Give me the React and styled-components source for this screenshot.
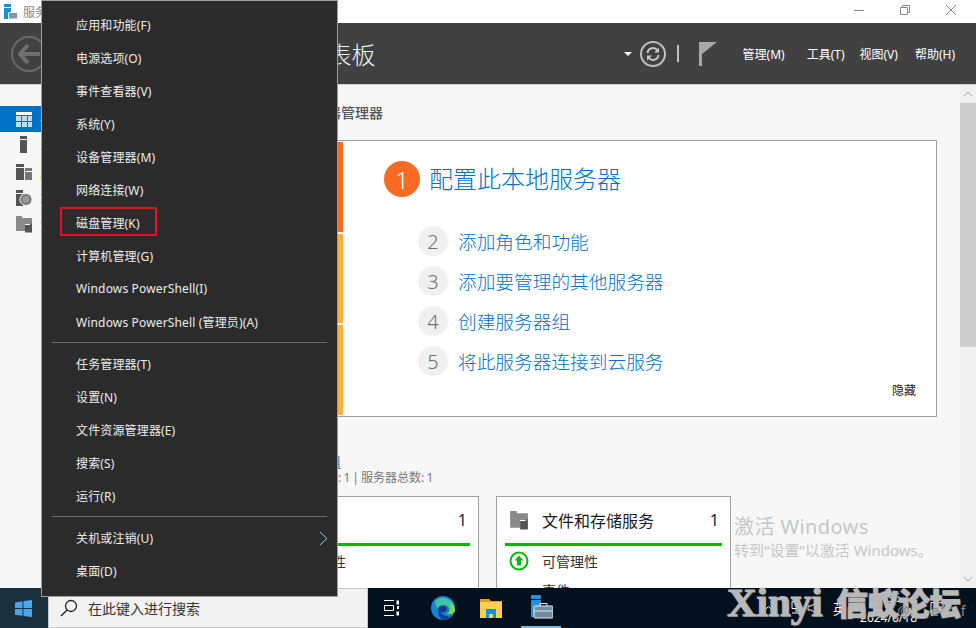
import React from 'react';
import styled, { createGlobalStyle } from 'styled-components';

const GlobalStyle = createGlobalStyle`
	html, body {
		margin: 0;
		padding: 0;
		background: #f7f7f7;
		overflow: hidden;
	}
	* {
		box-sizing: border-box;
	}
`;

const FONT = `"Noto Sans", "Noto Sans CJK SC", sans-serif`;

const menuGroups = [
	['应用和功能(F)', '电源选项(O)', '事件查看器(V)', '系统(Y)', '设备管理器(M)', '网络连接(W)', '磁盘管理(K)', '计算机管理(G)', 'Windows PowerShell(I)', 'Windows PowerShell (管理员)(A)'],
	['任务管理器(T)', '设置(N)', '文件资源管理器(E)', '搜索(S)', '运行(R)'],
	['关机或注销(U)', '桌面(D)'],
];

const steps = [
	['2', '添加角色和功能'],
	['3', '添加要管理的其他服务器'],
	['4', '创建服务器组'],
	['5', '将此服务器连接到云服务'],
];

const DashIcon = () => (
	<svg width="18" height="17" viewBox="0 0 18 17">
		<rect x="1" y="1" width="16" height="3" fill="#fff" />
		<path d="M1 5h5v5H1zM7 5h5v5H7zM13 5h4v5h-4zM1 11h5v5H1zM7 11h5v5H7zM13 11h4v5h-4z" fill="#bcdcf2" />
	</svg>
);

const ServerIcon = () => (
	<svg width="18" height="18" viewBox="0 0 18 18">
		<rect x="5" y="0" width="7" height="3" fill="#555" />
		<rect x="5" y="4" width="7" height="13" fill="#555" />
	</svg>
);

const ServersIcon = () => (
	<svg width="18" height="18" viewBox="0 0 18 18">
		<rect x="1" y="1" width="8" height="3" fill="#555" />
		<rect x="1" y="5" width="8" height="12" fill="#555" />
		<rect x="10" y="5" width="7" height="3" fill="#777" />
		<rect x="10" y="9" width="7" height="8" fill="#777" />
	</svg>
);

const IisIcon = () => (
	<svg width="18" height="18" viewBox="0 0 18 18">
		<rect x="1" y="1" width="7" height="3" fill="#555" />
		<rect x="1" y="5" width="7" height="12" fill="#555" />
		<circle cx="11" cy="10.500" r="6" fill="#777" stroke="#f7f7f7" />
		<circle cx="11" cy="10.500" r="3.500" fill="#999" />
	</svg>
);

const FilesIcon = ({ size = 18 }) => (
	<svg width={size} height={size} viewBox="0 0 18 18">
		<path d="M1 1h6v2h10v6h-7v7H1z" fill="#8a8a8a" />
		<path d="M10 10h4.500l2.500-2.500V17.500h-7z" fill="#555" />
	</svg>
);

function App() {
	return (
		<Page>
			<GlobalStyle />
			<TitleBar>
				<svg width="16" height="16" viewBox="0 0 16 16">
					<rect x="2" y="0" width="7" height="3" fill="#1b8ed8" />
					<rect x="2" y="4" width="7" height="11" fill="#1b8ed8" />
					<rect x="6.500" y="8.500" width="9" height="6.500" rx="1" fill="#7d97aa" stroke="#fff" />
				</svg>
				<TitleText>服务器管理器</TitleText>
				<WinControls>
					<svg width="12" height="12" viewBox="0 0 12 12"><path d="M1 6.500h10" stroke="#888" /></svg>
					<svg width="12" height="12" viewBox="0 0 12 12" fill="none"><path d="M1.500 3.500h7v7h-7zM3.500 3.500v-2h7v7h-2" stroke="#888" /></svg>
					<svg width="12" height="12" viewBox="0 0 12 12"><path d="M1 1l10 10M11 1L1 11" stroke="#888" /></svg>
				</WinControls>
			</TitleBar>

			<Header>
				<BackButton>
					<svg width="24" height="22" viewBox="0 0 24 22" fill="none">
						<path d="M11 2L3 11l8 9M3 11h20" stroke="#6f6f6f" strokeWidth="4" />
					</svg>
				</BackButton>
				<HeaderTitle>服务器管理器 • 仪表板</HeaderTitle>
				<Tools>
					<Caret />
					<RefreshButton>
						<svg width="16" height="16" viewBox="0 0 16 16" fill="none">
							<path d="M2.500 7A5.500 5.500 0 0 1 12.500 4.500M13.500 9A5.500 5.500 0 0 1 3.500 11.500" stroke="#c8c8c8" strokeWidth="2" />
							<path d="M14 1.500v5H9zM2 14.500v-5h5z" fill="#c8c8c8" />
						</svg>
					</RefreshButton>
					<Divider />
					<svg width="18" height="24" viewBox="0 0 18 24">
						<rect x="0" y="0" width="3" height="24" fill="#a8a8a8" />
						<path d="M3 0h15l-15 12z" fill="#a8a8a8" />
					</svg>
				</Tools>
				<Nav>
					<NavItem $after={22}>管理(M)</NavItem>
					<NavItem $after={15}>工具(T)</NavItem>
					<NavItem $after={17}>视图(V)</NavItem>
					<NavItem>帮助(H)</NavItem>
				</Nav>
			</Header>

			<Body>
				<Sidebar>
					<SideRow $active><DashIcon /><span>仪表板</span></SideRow>
					<SideRow><ServerIcon /><span>本地服务器</span></SideRow>
					<SideRow><ServersIcon /><span>所有服务器</span></SideRow>
					<SideRow><IisIcon /><span>IIS</span></SideRow>
					<SideRow><FilesIcon /><span>文件和存储服务</span></SideRow>
				</Sidebar>

				<Main>
					<Welcome>欢迎使用服务器管理器</Welcome>
					<QuickPanel>
						<Tiles>
							<Tile $color="#f96a22">快速启动</Tile>
							<Tile $color="#fdb03e">新增功能</Tile>
							<Tile $color="#fdb03e">了解详细信息</Tile>
						</Tiles>
						<QuickBody>
							<Lead>
								<LeadBadge>1</LeadBadge>
								<LeadText>配置此本地服务器</LeadText>
							</Lead>
							<Steps>
								{steps.map(([num, label]) => (
									<Step key={num}>
										<StepBadge>{num}</StepBadge>
										<StepText>{label}</StepText>
									</Step>
								))}
							</Steps>
							<HideLink>隐藏</HideLink>
						</QuickBody>
					</QuickPanel>

					<SectionTitle>角色和服务器组</SectionTitle>
					<SectionSub>角色: 1 | 服务器组: 1 | 服务器总数: 1</SectionSub>

					<Cards>
						<Card title="IIS" />
						<Card title="文件和存储服务" />
					</Cards>
				</Main>

				<Scrollbar>
					<ScrollArrow>
						<svg width="10" height="6" viewBox="0 0 10 6" fill="none"><path d="M1 5l4-4 4 4" stroke="#a0a0a0" /></svg>
					</ScrollArrow>
					<ScrollThumb />
					<ScrollArrow $bottom>
						<svg width="10" height="6" viewBox="0 0 10 6" fill="none"><path d="M1 1l4 4 4-4" stroke="#a0a0a0" /></svg>
					</ScrollArrow>
				</Scrollbar>
			</Body>

			<Taskbar>
				<StartButton>
					<svg width="17" height="17" viewBox="0 0 17 17">
						<path d="M0 2.400l7.500-1.100v6.800H0zM8.500 1.100L17 0v8.100H8.500zM0 9h7.500v6.800L0 14.700zM8.500 9H17v8l-8.500-1.100z" fill="#4aa5ec" />
					</svg>
				</StartButton>
				<SearchBox>
					<svg width="18" height="18" viewBox="0 0 18 18" fill="none">
						<circle cx="11" cy="7" r="5.500" stroke="#222" strokeWidth="1.300" />
						<path d="M7 11L1 17" stroke="#222" strokeWidth="1.500" />
					</svg>
					<SearchText>在此键入进行搜索</SearchText>
				</SearchBox>
				<TaskSlot $pad={4}>
					<svg width="16" height="16" viewBox="0 0 16 16" fill="none" stroke="#fff">
						<path d="M1 .5h10M1 15.500h10M1.500 5.500h9v5h-9z" />
						<rect x="14" y="1" width="1.500" height="3" fill="#fff" />
						<rect x="14" y="6" width="2" height="3" fill="#fff" stroke="none" />
						<rect x="14" y="12" width="1.500" height="3" fill="#fff" />
					</svg>
				</TaskSlot>
				<TaskSlot>
					<svg width="26" height="26" viewBox="0 0 26 26">
						<circle cx="13" cy="13" r="12" fill="#1682d8" />
						<path d="M5 6a12 12 0 0 1 20 9c0 2-2 4-5 4h-4c3-1 4-3 3-6-2-4-10-4-11 1-2-3-3-5-3-8z" fill="#3ec6a0" />
						<path d="M20 8a12 12 0 0 1 5 7c0 2-2 4-5 4h-3c3-2 4-6 3-11z" fill="#7ad94e" />
						<path d="M8 14c0-3 4-4 7-3 3 1 2 5 0 6-2 1-4 0-5-1 1 3 4 5 8 5l2 1a12 12 0 0 1-7 3c-4-2-5-7-5-11z" fill="#0c3f8f" />
					</svg>
				</TaskSlot>
				<TaskSlot $pad={4}>
					<svg width="22" height="20" viewBox="0 0 22 20">
						<path d="M0 1h9l2 2h11v3H0z" fill="#e0a020" />
						<rect x="0" y="4" width="22" height="16" fill="#fbd154" />
						<path d="M6 11h10v9h-3v-4H9v4H6z" fill="#1b8ed8" />
					</svg>
				</TaskSlot>
				<TaskSlot $active>
					<svg width="24" height="26" viewBox="0 0 24 26">
						<rect x="2" y="0" width="10" height="4" fill="#2590dc" />
						<rect x="2" y="5" width="10" height="17" fill="#2590dc" />
						<rect x="5" y="11" width="19" height="12" rx="1" fill="#6f8ca3" stroke="#e8eef2" />
						<path d="M11 11V8.500h7V11M5 16h19" stroke="#e8eef2" fill="none" />
					</svg>
				</TaskSlot>
				<Tray>
					<TrayCaret width="9" height="6" viewBox="0 0 9 6" fill="none">
						<path d="M.5 5.500l4-4 4 4" stroke="#fff" />
					</TrayCaret>
					<TrayIcons>
						<svg width="14" height="14" viewBox="0 0 14 14" fill="none" stroke="#fff"><path d="M3 .5h8v7H3zM7 8v3M3 12h8" /></svg>
						<svg width="14" height="14" viewBox="0 0 14 14" fill="none" stroke="#fff"><path d="M11 1L5 5H2v4h3l6 4z" /></svg>
					</TrayIcons>
					<TrayText>英</TrayText>
					<Clock>
						<span>9:36</span>
						<span>2024/6/18</span>
					</Clock>
					<svg width="14" height="14" viewBox="0 0 14 14" fill="none" stroke="#fff"><path d="M1 1.500h12v9H6l-3 2.500v-2.500H1z" /></svg>
				</Tray>
			</Taskbar>

			<ActivateNote>
				<ActivateTitle>激活 Windows</ActivateTitle>
				<ActivateSub>转到“设置”以激活 Windows。</ActivateSub>
			</ActivateNote>

			<Watermark>
				<WatermarkLatin>Xinyi</WatermarkLatin>
				<WatermarkCjk>信蚁论坛</WatermarkCjk>
			</Watermark>
			<Handle>@ e f</Handle>

			<ContextMenu>
				{menuGroups.map((group, i) => (
					<MenuGroup key={i}>
						{group.map((label) => (
							<MenuItem key={label}>
								{label}
								{label === '磁盘管理(K)' && <Highlight />}
								{label === '关机或注销(U)' && (
									<Chevron width="9" height="15" viewBox="0 0 9 15" fill="none">
										<path d="M1 1l7 6.500-7 6.500" stroke="#8fc4ee" />
									</Chevron>
								)}
							</MenuItem>
						))}
					</MenuGroup>
				))}
			</ContextMenu>
		</Page>
	);
}

function Card({ title }) {
	return (
		<CardBox>
			<CardHead>
				<CardIcon><FilesIcon size={20} /></CardIcon>
				<CardTitle>{title}</CardTitle>
				<CardCount>1</CardCount>
			</CardHead>
			<CardBar />
			<CardRow>
				<CardIcon>
					<svg width="20" height="20" viewBox="0 0 20 20" fill="none">
						<circle cx="10" cy="10" r="8.500" stroke="#08b808" strokeWidth="2" />
						<path d="M10 4.500l4.500 5H12v5H8v-5H5.500z" fill="#08b808" />
					</svg>
				</CardIcon>
				<span>可管理性</span>
			</CardRow>
			<CardRow>
				<CardIcon />
				<span>事件</span>
			</CardRow>
		</CardBox>
	);
}

const Page = styled.div`
	position: relative;
	width: 976px;
	height: 628px;
	display: flex;
	flex-direction: column;
	overflow: hidden;
	font-family: ${FONT};
	background: #f7f7f7;
`;

const TitleBar = styled.div`
	height: 23px;
	flex-shrink: 0;
	display: flex;
	align-items: center;
	padding-left: 2px;
	background: #fff;
`;

const TitleText = styled.span`
	margin-left: 5px;
	font-size: 12px;
	color: #888;
`;

const WinControls = styled.div`
	margin-left: auto;
	display: flex;
	align-items: center;
	gap: 34px;
	padding-right: 19px;
	margin-top: -4px;
`;

const Header = styled.div`
	height: 62px;
	flex-shrink: 0;
	display: flex;
	align-items: center;
	padding-left: 11px;
	background: #414141;
	border-bottom: 1px solid #d0d0d0;
`;

const BackButton = styled.div`
	width: 36px;
	height: 36px;
	border: 2px solid #6a6a6a;
	border-radius: 50%;
	display: flex;
	align-items: center;
	justify-content: center;
	flex-shrink: 0;
`;

const HeaderTitle = styled.div`
	margin-left: 91px;
	font-size: 24px;
	color: #f4f4f4;
	white-space: nowrap;
	font-weight: 300;
`;

const Tools = styled.div`
	margin-left: auto;
	display: flex;
	align-items: center;
`;

const Caret = styled.div`
	width: 0;
	height: 0;
	border-left: 4px solid transparent;
	border-right: 4px solid transparent;
	border-top: 4px solid #fff;
	margin-right: 8px;
`;

const RefreshButton = styled.div`
	width: 26px;
	height: 26px;
	border: 2px solid #c0c0c0;
	border-radius: 50%;
	display: flex;
	align-items: center;
	justify-content: center;
`;

const Divider = styled.div`
	width: 2px;
	height: 17px;
	background: #c0c0c0;
	margin: 0 20px 0 11px;
`;

const Nav = styled.div`
	display: flex;
	align-items: center;
	margin-left: 26px;
	padding-right: 21px;
`;

const NavItem = styled.span`
	font-size: 12px;
	color: #fff;
	white-space: nowrap;
	margin-right: ${(p) => p.$after || 0}px;
`;

const Body = styled.div`
	flex: 1;
	min-height: 0;
	display: flex;
	overflow: hidden;
`;

const Sidebar = styled.div`
	width: 243px;
	flex-shrink: 0;
	padding-top: 21px;
	background: #f7f7f7;
`;

const SideRow = styled.div`
	height: 26.3px;
	display: flex;
	align-items: center;
	padding-left: 15px;
	gap: 7px;
	font-size: 13px;
	color: ${(p) => (p.$active ? '#d8ecf8' : '#c87a20')};
	background: ${(p) => (p.$active ? '#0072c6' : 'transparent')};
`;

const Main = styled.div`
	width: 717px;
	flex-shrink: 0;
	padding: 18px 0 0;
`;

const Welcome = styled.div`
	font-size: 14px;
	line-height: 20px;
	color: #555;
	font-weight: 500;
`;

const QuickPanel = styled.div`
	margin: 17px 0 0 1px;
	width: 693px;
	height: 277px;
	display: flex;
	background: #fff;
	border: 1px solid #a0a0a0;
	padding: 1px;
`;

const Tiles = styled.div`
	width: 97px;
	flex-shrink: 0;
	display: flex;
	flex-direction: column;
	gap: 2px;
`;

const Tile = styled.div`
	flex: 1;
	padding: 8px;
	font-size: 13px;
	color: #fff;
	background: ${(p) => p.$color};
`;

const QuickBody = styled.div`
	flex: 1;
	display: flex;
	flex-direction: column;
	padding: 19px 19px 0 41px;
`;

const Lead = styled.div`
	display: flex;
	align-items: center;
	gap: 9px;
`;

const LeadBadge = styled.div`
	width: 36px;
	height: 36px;
	border-radius: 50%;
	background: #f96a22;
	color: #fff;
	font-size: 24px;
	font-weight: 300;
	display: flex;
	align-items: center;
	justify-content: center;
`;

const LeadText = styled.div`
	font-size: 24px;
	line-height: 36px;
	color: #0072c6;
	font-weight: 300;
`;

const Steps = styled.div`
	margin: 29px 0 0 34px;
	display: flex;
	flex-direction: column;
	gap: 10px;
`;

const Step = styled.div`
	display: flex;
	align-items: center;
	gap: 10px;
	height: 30px;
`;

const StepBadge = styled.div`
	width: 30px;
	height: 30px;
	border-radius: 50%;
	background: #f0f0f0;
	color: #707070;
	font-size: 20px;
	font-weight: 300;
	display: flex;
	align-items: center;
	justify-content: center;
`;

const StepText = styled.div`
	font-size: 18.7px;
	padding-bottom: 2px;
	color: #0072c6;
	font-weight: 300;
	white-space: nowrap;
`;

const HideLink = styled.div`
	align-self: flex-end;
	margin-top: 5px;
	font-size: 12px;
	color: #222;
`;

const SectionTitle = styled.div`
	margin-top: 35px;
	font-size: 14px;
	line-height: 20px;
	color: #4a78b0;
`;

const SectionSub = styled.div`
	font-size: 12px;
	line-height: 16px;
	margin-top: -2px;
	color: #777;
	word-spacing: -1px;
`;

const Cards = styled.div`
	margin: 10px 0 0 1px;
	display: flex;
	gap: 17px;
`;

const CardBox = styled.div`
	width: 235px;
	height: 140px;
	flex-shrink: 0;
	padding: 0 8px;
	background: #fff;
	border: 1px solid #a0a0a0;
`;

const CardHead = styled.div`
	height: 46px;
	display: flex;
	align-items: center;
	padding-right: 3px;
`;

const CardIcon = styled.div`
	width: 37px;
	padding-left: 4px;
	flex-shrink: 0;
	display: flex;
	align-items: center;
`;

const CardTitle = styled.div`
	flex: 1;
	font-size: 16px;
	color: #1a1a1a;
`;

const CardCount = styled.div`
	font-size: 16px;
	color: #0c2a4a;
`;

const CardBar = styled.div`
	height: 3px;
	background: #08b808;
`;

const CardRow = styled.div`
	display: flex;
	align-items: center;
	height: 29px;
	font-size: 14px;
	color: #333;
`;

const Scrollbar = styled.div`
	margin-left: auto;
	width: 16px;
	flex-shrink: 0;
	display: flex;
	flex-direction: column;
	background: #f0f0f0;
`;

const ScrollArrow = styled.div`
	height: 18px;
	display: flex;
	align-items: center;
	justify-content: center;
	margin-top: ${(p) => (p.$bottom ? 'auto' : '0')};
`;

const ScrollThumb = styled.div`
	height: 244px;
	background: #cdcdcd;
`;

const Taskbar = styled.div`
	height: 40px;
	flex-shrink: 0;
	display: flex;
	align-items: stretch;
	background: #03111f;
`;

const StartButton = styled.div`
	width: 48px;
	display: flex;
	align-items: center;
	justify-content: center;
	padding-right: 1px;
	background: #1a303d;
`;

const SearchBox = styled.div`
	width: 320px;
	display: flex;
	align-items: center;
	padding-left: 11px;
	background: #f2f2f2;
	border: 1px solid #c8c8c8;
`;

const SearchText = styled.span`
	margin-left: 10px;
	font-size: 14px;
	color: #333;
`;

const TaskSlot = styled.div`
	width: ${(p) => (p.$active ? '40px' : '50px')};
	margin-left: ${(p) => (p.$active ? '3px' : '0')};
	padding-right: ${(p) => p.$pad || 0}px;
	display: flex;
	align-items: center;
	justify-content: center;
	box-shadow: ${(p) => (p.$active ? 'inset 0 -2px 0 #76b9ed' : 'none')};
`;

const Tray = styled.div`
	margin-left: auto;
	display: flex;
	align-items: center;
	gap: 13px;
	padding-right: 32px;
`;

const TrayCaret = styled.svg`
	margin-right: 3px;
`;

const TrayIcons = styled.div`
	display: flex;
	align-items: center;
	gap: 3px;
`;

const TrayText = styled.span`
	font-size: 14px;
	color: #fff;
`;

const Clock = styled.div`
	display: flex;
	flex-direction: column;
	align-items: center;
	font-size: 12px;
	line-height: 20px;
	color: #fff;
`;

const ActivateNote = styled.div`
	position: absolute;
	left: 734px;
	top: 513px;
	color: #c6c6c6;
	white-space: nowrap;
`;

const ActivateTitle = styled.div`
	font-size: 20px;
	line-height: 28px;
	letter-spacing: 0.4px;
`;

const ActivateSub = styled.div`
	font-size: 15px;
	line-height: 20px;
	margin-top: -1px;
`;

const Watermark = styled.div`
	position: absolute;
	left: 727px;
	top: 582px;
	display: flex;
	align-items: center;
	gap: 14px;
	color: #b8b8b8;
	white-space: nowrap;
	-webkit-text-stroke: 1px #b8b8b8;
	text-shadow: 1px 1px 0 #555;
`;

const WatermarkLatin = styled.span`
	font-family: "Liberation Serif", serif;
	font-weight: 700;
	font-size: 41px;
	line-height: 40px;
`;

const WatermarkCjk = styled.span`
	font-family: "Noto Sans CJK SC", sans-serif;
	font-weight: 900;
	font-size: 31px;
	line-height: 40px;
`;

const Handle = styled.div`
	position: absolute;
	left: 897px;
	top: 601px;
	width: 72px;
	font-size: 14px;
	line-height: 20px;
	color: #8a8a8a;
	word-spacing: 18px;
	white-space: nowrap;
`;

const ContextMenu = styled.div`
	position: absolute;
	left: 41px;
	top: 0;
	width: 297px;
	height: 597px;
	padding-top: 7px;
	background: #2b2b2b;
	border: 1px solid #a0a0a0;
`;

const MenuGroup = styled.div`
	& + & {
		margin: 4px 10px 0;
		padding-top: 4px;
		border-top: 1px solid #6e6e6e;
	}
	& + & > div {
		margin: 0 -10px;
	}
`;

const MenuItem = styled.div`
	position: relative;
	height: 33px;
	display: flex;
	align-items: center;
	padding-left: 34px;
	font-size: 12px;
	letter-spacing: 0.15px;
	color: #ececec;
	white-space: nowrap;
`;

const Highlight = styled.div`
	position: absolute;
	left: 18px;
	top: 1px;
	width: 97px;
	height: 29px;
	border: 2px solid #e81123;
`;

const Chevron = styled.svg`
	position: absolute;
	right: 9px;
	top: 10px;
`;

export default App;
